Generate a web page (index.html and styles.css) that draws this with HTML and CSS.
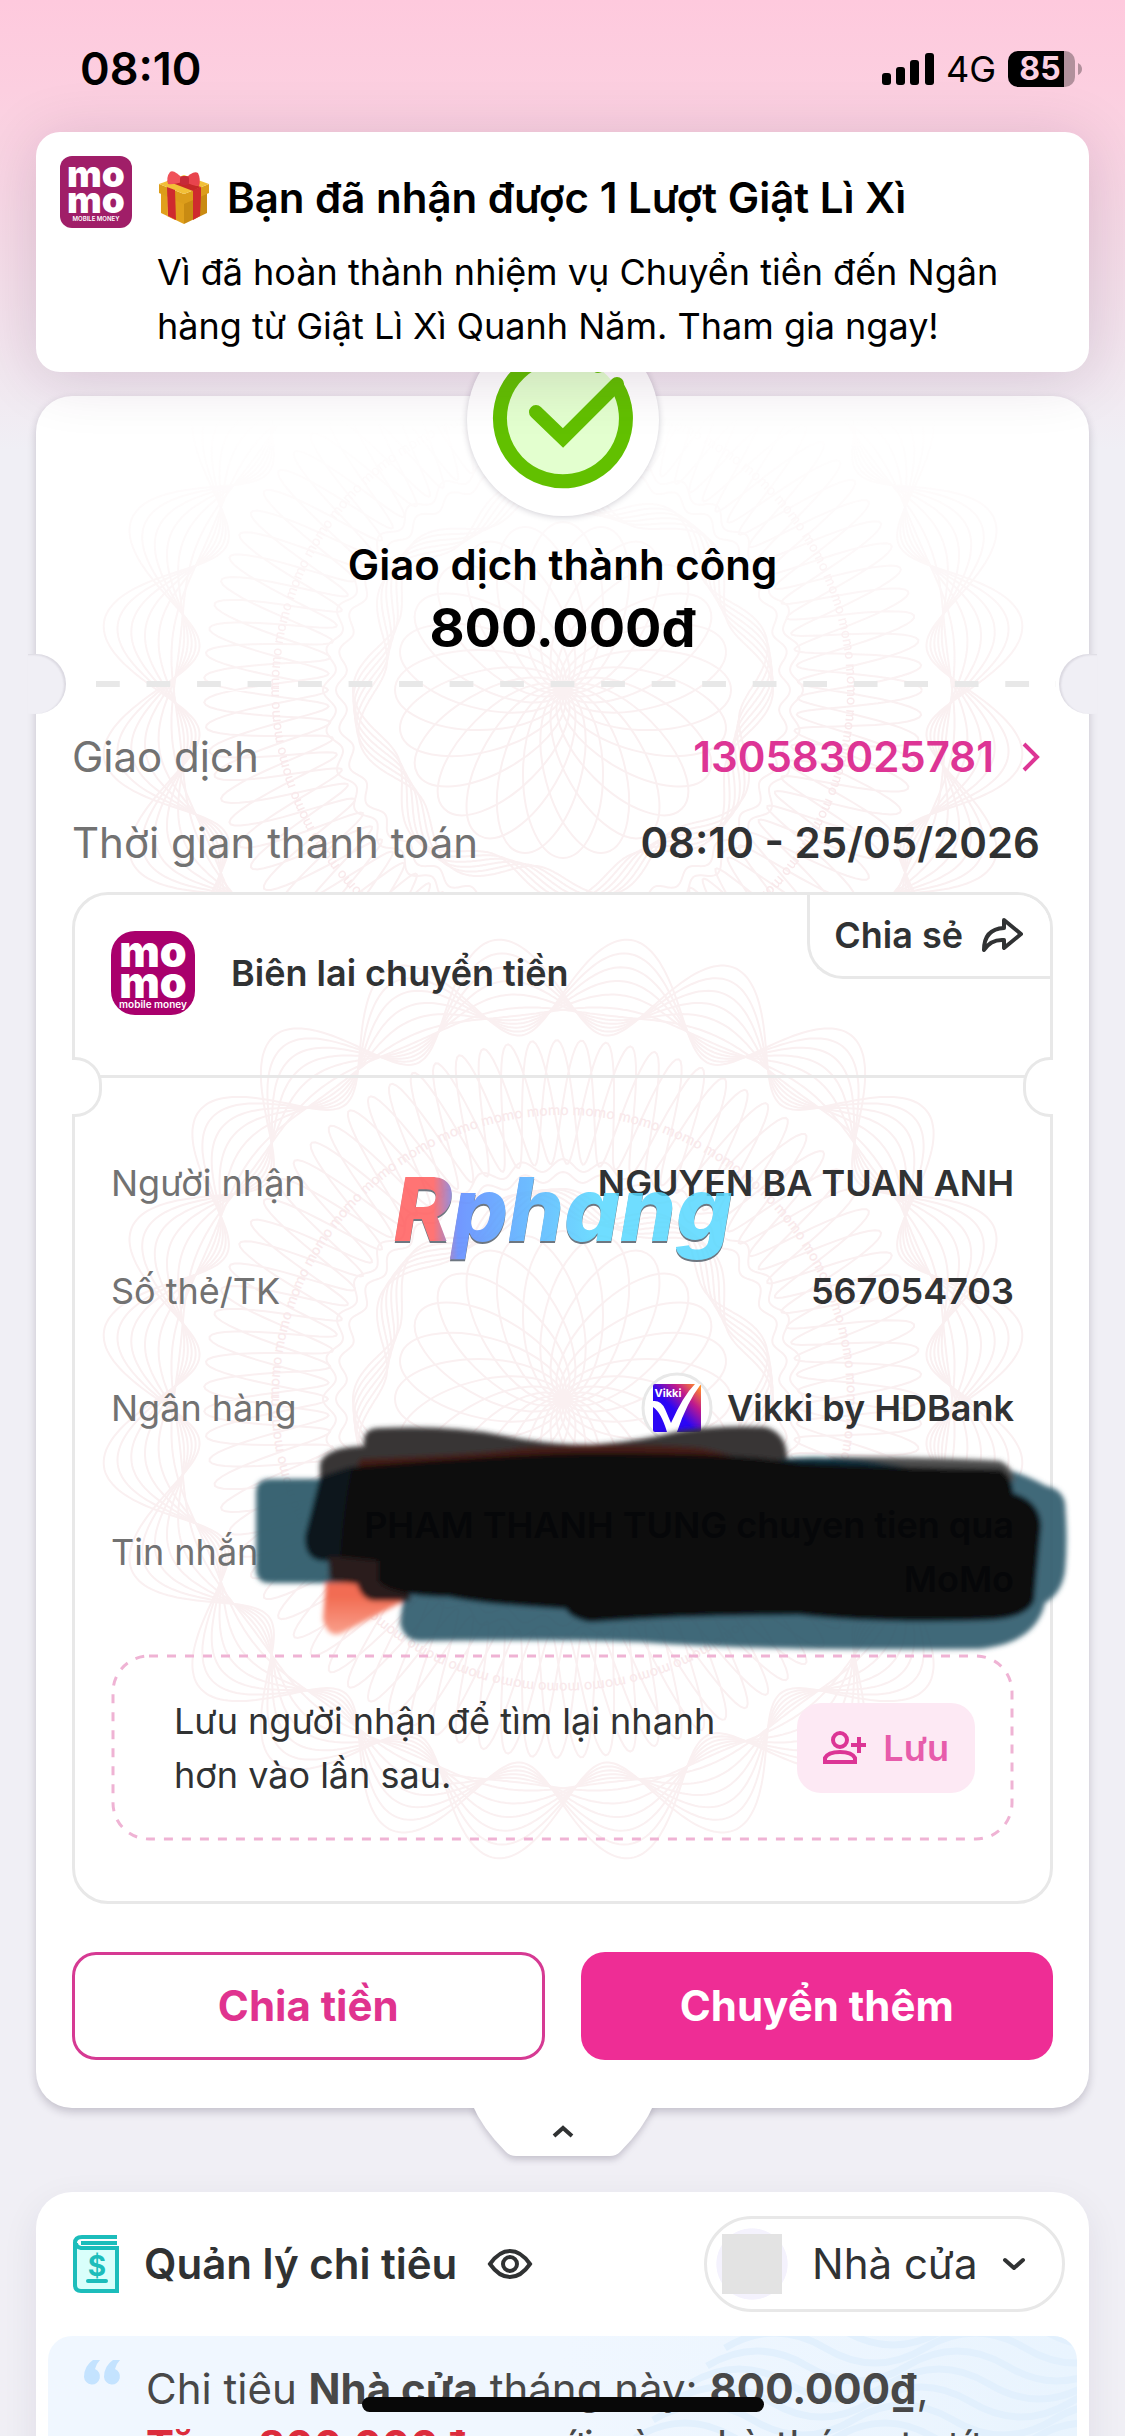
FILE: index.html
```html
<!doctype html>
<html lang="vi">
<head>
  <meta charset="utf-8">
  <meta name="viewport" content="width=device-width, initial-scale=1">
  <title>Giao dịch thành công</title>
  <link rel="stylesheet" href="styles.css">
</head>

<body>
  <svg class="defs" aria-hidden="true">
    <symbol id="momo" viewBox="0 0 84 84">
      <text class="mo" x="42" y="36" text-anchor="middle">mo</text>
      <text class="mo" x="42" y="67" text-anchor="middle">mo</text>
    </symbol>
    <symbol id="down" viewBox="0 0 24 14">
      <path d="M3 3l9 8 9-8" fill="none" stroke="currentColor" stroke-width="4" stroke-linecap="round" stroke-linejoin="round"/>
    </symbol>
  </svg>

  <header class="status">
    <span class="time">08:10</span>
    <div class="signals">
      <svg width="52" height="34" viewBox="0 0 52 34">
        <rect x="0" y="21" width="9" height="12" rx="3"/>
        <rect x="14" y="15" width="9" height="18" rx="3"/>
        <rect x="28" y="8" width="9" height="25" rx="3"/>
        <rect x="43" y="1" width="9" height="32" rx="3"/>
      </svg>
      <span class="network">4G</span>
      <svg width="74" height="36" viewBox="0 0 74 36">
        <path d="M56 0h1a10 10 0 0 1 10 10v16a10 10 0 0 1-10 10h-1z" fill="#b1909c"/>
        <path d="M10 0h46v36H10A10 10 0 0 1 0 26V10A10 10 0 0 1 10 0z"/>
        <path d="M70 12q4 2 4 6t-4 6z" fill="#b1909c"/>
        <text class="charge" x="32" y="29" text-anchor="middle">85</text>
      </svg>
    </div>
  </header>

  <section class="banner">
    <div class="logo logo-small">
      <svg viewBox="0 0 84 84"><use href="#momo"/><text class="tag" x="42" y="76" text-anchor="middle">MOBILE MONEY</text></svg>
    </div>
    <div class="banner-text">
      <h2>
        <svg class="gift" viewBox="0 0 54 54">
          <path d="M4 19l23 9v25L4 42z" fill="#e0a01c"/>
          <path d="M50 19l-23 9v25l23-11z" fill="#c98b12"/>
          <path d="M10 22l8 3v24l-8-4z" fill="#edb52e"/>
          <path d="M2 13l25 10 25-10v9L27 33 2 22z" fill="#dc9d1a"/>
          <path d="M2 13L27 4l25 9-25 10z" fill="#f2c037"/>
          <path d="M10 10l7-3 27 9-8 4z" fill="#c62828"/>
          <path d="M36 19l8-3v8l-1 21-7 4z" fill="#cf2a2e"/>
          <path d="M10 16l8 3 1 30-8-4z" fill="#cf2a2e"/>
          <path d="M27 9Q17-2 13 1q-4 5-2 12 6 1 16-3z" fill="#f0525a"/>
          <path d="M27 9q9-10 14-7 3 6 1 13-7 0-15-5z" fill="#e8444d"/>
          <rect x="23" y="5" width="9" height="9" rx="3" fill="#c62a38"/>
        </svg>
        Bạn đã nhận được 1 Lượt Giật Lì Xì
      </h2>
      <p>Vì đã hoàn thành nhiệm vụ Chuyển tiền đến Ngân hàng từ Giật Lì Xì Quanh Năm. Tham gia ngay!</p>
    </div>
  </section>

  <main>
    <section class="card result">
      <div class="pattern-clip"><svg class="pattern" viewBox="-470 -470 940 940"></svg></div>
      <div class="badge">
        <svg viewBox="0 0 192 192">
          <circle cx="96" cy="95" r="62" fill="#e3ffcf"/>
          <path d="M150 62A63 63 0 1 1 131 42" fill="none" stroke="#62c000" stroke-width="14" stroke-linecap="round"/>
          <path d="M69 88l27 26 54-54" fill="none" stroke="#62c000" stroke-width="14" stroke-linecap="round"/>
        </svg>
      </div>

      <h1>Giao dịch thành công</h1>
      <p class="amount">800.000đ</p>
      <div class="perforation"></div>

      <dl class="summary">
        <div class="row">
          <dt>Giao dịch</dt>
          <dd><a href="#giao-dich">130583025781
            <svg width="18" height="32" viewBox="0 0 18 32"><path d="M2 3l13 13L2 29" fill="none" stroke="currentColor" stroke-width="4"/></svg></a></dd>
        </div>
        <div class="row">
          <dt>Thời gian thanh toán</dt>
          <dd>08:10 - 25/05/2026</dd>
        </div>
      </dl>

      <article class="receipt">
        <div class="pattern-clip"><svg class="pattern" viewBox="-470 -470 940 940"></svg></div>
        <div class="receipt-head">
          <div class="receipt-title">
            <div class="logo">
              <svg viewBox="0 0 84 84"><use href="#momo"/><text class="tag tag-lower" x="42" y="77" text-anchor="middle">mobile money</text></svg>
            </div>
            <h3>Biên lai chuyển tiền</h3>
          </div>
          <button class="share" type="button">Chia sẻ
            <svg width="42" height="36" viewBox="0 0 42 36"><path d="M23 3l17 14-17 14v-8Q10 22 3 33 3 12 23 11z" fill="none" stroke="currentColor" stroke-width="4" stroke-linejoin="round"/></svg>
          </button>
        </div>
        <div class="receipt-cut"></div>

        <dl class="details">
          <div class="row">
            <dt>Người nhận</dt>
            <dd>NGUYEN BA TUAN ANH</dd>
          </div>
          <div class="row">
            <dt>Số thẻ/TK</dt>
            <dd>567054703</dd>
          </div>
          <div class="row">
            <dt>Ngân hàng</dt>
            <dd class="bank">
              <svg class="bank-logo" viewBox="0 0 72 72">
                <defs>
                  <linearGradient id="vikki" x1="0" y1="1" x2="1" y2="0">
                    <stop offset=".45" stop-color="#2b06f5"/>
                    <stop offset=".72" stop-color="#c01a8c"/>
                    <stop offset=".95" stop-color="#ff8a2a"/>
                  </linearGradient>
                </defs>
                <circle cx="36" cy="36" r="34" fill="#fff" stroke="#e8e8e8" stroke-width="3"/>
                <rect x="12" y="12" width="48" height="48" rx="2" fill="url(#vikki)"/>
                <path d="M12 29q8-1 12 8l6 14Q42 24 54 12h6Q46 30 36 60H26Q20 40 12 35z" fill="#fff"/>
                <text class="vikki" x="27" y="25" text-anchor="middle">Vikki</text>
              </svg>
              Vikki by HDBank
            </dd>
          </div>
          <div class="row message">
            <dt>Tin nhắn</dt>
            <dd>PHAM THANH TUNG chuyen tien qua MoMo</dd>
            <svg class="scribble" viewBox="244 1413 829 250">
              <defs>
                <filter id="soft" x="-5%" y="-5%" width="110%" height="110%"><feGaussianBlur stdDeviation="2.5"/></filter>
                <linearGradient id="rust" x1="0" y1="0" x2="0" y2="1">
                  <stop offset=".4" stop-color="#f26c52"/>
                  <stop offset="1" stop-color="#f9a08c"/>
                </linearGradient>
              </defs>
              <g filter="url(#soft)">
                <path fill="url(#rust)" d="M327 1570L323 1618Q328 1638 342 1632L404 1600V1570z"/>
                <path fill="#2f5c6c" opacity=".95" d="M256 1490Q257 1478 270 1478H345V1582H270Q256 1582 256 1568z"/>
                <path fill="#2f5c6c" opacity=".92" d="M404 1590L400 1622Q404 1640 420 1640Q560 1638 640 1641Q760 1650 980 1648Q1036 1642 1045 1602Q1062 1592 1065 1570Q1068 1540 1065 1502Q1062 1488 1046 1485Q1030 1476 1012 1470L960 1480V1580z"/>
                <path fill="#373536" d="M364 1440Q364 1427 380 1427Q450 1424 500 1434Q560 1446 600 1443Q640 1440 680 1430Q720 1424 765 1426Q788 1432 787 1460L780 1490H360L320 1500L320 1462Q326 1446 364 1445z"/>
                <path fill="#4f4f50" d="M830 1456Q940 1456 1000 1460Q1013 1466 1014 1480L830 1480z"/>
                <path fill="#0b3340" d="M780 1458Q820 1454 870 1460L960 1474L780 1480z"/>
                <path fill="#07191f" d="M320 1476L305 1535Q304 1560 325 1560H400V1466H350z"/>
                <path fill="#2b1f1c" d="M328 1556L330 1580L357 1583Q362 1600 376 1600H410V1556z"/>
                <path fill="#451a12" d="M357 1468L360 1458Q480 1454 520 1447Q640 1441 700 1447Q740 1454 760 1470z"/>
                <path fill="#0d0d0d" d="M352 1466Q520 1452 600 1452Q740 1452 800 1462Q920 1467 1000 1468Q1012 1474 1013 1492Q1040 1500 1041 1525L1034 1600Q1026 1617 990 1619Q880 1623 800 1614Q690 1614 590 1621Q570 1617 566 1608Q480 1603 450 1596Q390 1595 378 1580V1560L340 1556Q344 1500 352 1466z"/>
              </g>
            </svg>
          </div>
        </dl>

        <svg class="watermark" viewBox="0 0 350 100">
          <defs>
            <linearGradient id="brand" gradientUnits="userSpaceOnUse" x1="0" y1="0" x2="350" y2="0">
              <stop offset=".13" stop-color="#ff5c5c"/>
              <stop offset=".2" stop-color="#5a86ff"/>
              <stop offset=".38" stop-color="#54adff"/>
              <stop offset=".6" stop-color="#56d8ff"/>
            </linearGradient>
          </defs>
          <text class="shade" x="175" y="74" text-anchor="middle">Rphang</text>
          <text x="175" y="72" text-anchor="middle" fill="url(#brand)">Rphang</text>
        </svg>

        <div class="save">
          <svg class="save-frame"><rect x="2" y="2" rx="36"/></svg>
          <p>Lưu người nhận để tìm lại nhanh hơn vào lần sau.</p>
          <button type="button">
            <svg width="44" height="34" viewBox="0 0 44 34"><g fill="none" stroke="currentColor" stroke-width="4"><circle cx="17" cy="9" r="7"/><path d="M2 31v-4q3-6 15-6t15 6v4zM36 6v16M28 14h15"/></g></svg>
            <span>Lưu</span>
          </button>
        </div>
      </article>

      <div class="actions">
        <button type="button" class="outline">Chia tiền</button>
        <button type="button" class="solid">Chuyển thêm</button>
      </div>
    </section>

    <button class="collapse" type="button" aria-label="Thu gọn">
      <svg width="182" height="48" viewBox="0 0 182 48">
        <path d="M0-4H182Q172 20 148 44 144 48 138 48H44Q38 48 34 44 10 20 0-4z" fill="#fff"/>
        <path d="M82 28l9-8 9 8" fill="none" stroke="#303233" stroke-width="4"/>
      </svg>
    </button>

    <section class="card spending">
      <div class="spending-head">
        <svg width="46" height="60" viewBox="0 0 46 60">
          <path d="M3 12h40v44H8q-5 0-5-5z" fill="#d9fffb"/>
          <path d="M44 3H9Q2 3 2 9v42q0 6 6 6h36V14H8q-5-1-5-5M8 9h36" fill="none" stroke="#1cbdbb" stroke-width="4"/>
          <text class="dollar" x="24" y="42" text-anchor="middle">$</text>
          <path d="M15 47h18" stroke="#1cbdbb" stroke-width="4" stroke-linecap="round"/>
        </svg>
        <h2>Quản lý chi tiêu</h2>
        <button class="eye" type="button" aria-label="Ẩn số tiền">
          <svg width="46" height="32" viewBox="0 0 46 32"><g fill="none" stroke="currentColor" stroke-width="4"><path d="M3 16Q12 3 23 3t20 13Q34 29 23 29T3 16z"/><circle cx="23" cy="16" r="7"/></g></svg>
        </button>
        <label class="category">
          <span class="thumb"></span>
          <select aria-label="Danh mục"><option>Nhà cửa</option></select>
          <svg width="24" height="14"><use href="#down"/></svg>
        </label>
      </div>
      <div class="quote">
        <svg class="waves" viewBox="0 0 600 110" preserveAspectRatio="xMaxYMin slice"></svg>
        <svg class="marks" width="38" height="26" viewBox="0 0 38 26"><g fill="#c4e3ff"><path d="M16 0Q12 4 11 9a8 8 0 1 1-11 8Q0 6 9 0z"/><path d="M36 0q-4 4-5 9a8 8 0 1 1-11 8Q20 6 29 0z"/></g></svg>
        <p>Chi tiêu <b>Nhà cửa</b> tháng này: <b>800.000₫</b>,<br>
          <b class="up">Tăng 800.000₫</b> so với cùng kỳ tháng trước</p>
      </div>
    </section>
  </main>

  <div class="home-bar"></div>
  <script src="script.js"></script>
</body>
</html>
```
FILE: styles.css
```css
* {
  box-sizing: border-box;
}
html, body {
  height: 100%;
  margin: 0;
  overflow: hidden;
}
body {
  font-family: Inter, "Noto Sans", sans-serif;
  font-size: 36px;
  line-height: 54px;
  color: #303233;
  background: #f0eff5 linear-gradient(#fec9dd 0, #fccfe0 90px, #f5dbe7 240px, #f0eff5 450px) no-repeat;
}
h1, h2, h3, p, dl, dd {
  margin: 0;
}
button, select {
  font: inherit;
  color: inherit;
  border: 0;
  padding: 0;
  background: none;
}
a {
  text-decoration: none;
}
svg, symbol {
  flex: none;
  overflow: visible;
}
.defs {
  position: absolute;
  width: 0;
  height: 0;
}

/* status bar */
.status {
  display: flex;
  justify-content: space-between;
  align-items: center;
  height: 132px;
  padding: 6px 43px 0 80px;
  color: #000;
}
.time {
  font-size: 45px;
  font-weight: 600;
}
.signals {
  display: flex;
  align-items: center;
  gap: 12px;
}
.charge {
  font-size: 32px;
  font-weight: 700;
  fill: #fbd0e0;
}

/* notification */
.banner {
  position: relative;
  z-index: 2;
  display: flex;
  gap: 25px;
  margin: 0 36px;
  padding: 24px;
  height: 240px;
  border-radius: 24px;
  background: #fff;
  color: #000;
  box-shadow: 0 6px 60px rgba(70, 20, 70, .16);
}
.banner h2 {
  display: flex;
  align-items: center;
  gap: 16px;
  margin: 15px 0 20px;
  font-size: 42px;
  font-weight: 600;
}
.gift {
  width: 54px;
  height: 54px;
}
.logo {
  flex: none;
  width: 84px;
  height: 84px;
  border-radius: 24px;
  background: #a9006c;
}
.logo svg {
  display: block;
}
.logo-small {
  width: 72px;
  height: 72px;
  border-radius: 12px;
  background: #a01e68;
}
.mo {
  font-size: 43px;
  font-weight: 900;
  fill: #fff;
}
.tag {
  font-size: 7px;
  font-weight: 600;
  fill: #fff;
}
.tag-lower {
  font-size: 10px;
}

/* cards */
.card {
  position: relative;
  margin: 24px 36px 0;
  border-radius: 36px;
  background: #fff;
  box-shadow: 0 4px 8px rgba(40, 30, 60, .22);
}
.result {
  padding: 142px 36px 48px;
}
.result > * {
  position: relative;
}
.result > .pattern-clip, .receipt > .pattern-clip {
  position: absolute;
  inset: 0;
  overflow: hidden;
  border-radius: 36px;
}
.result > .pattern-clip {
  mask-image: linear-gradient(transparent 20px, #000 320px);
}
.pattern {
  position: absolute;
  top: -176px;
  left: 50%;
  width: 940px;
  height: 940px;
  transform: translateX(-50%);
  fill: none;
  stroke: #faf0f1;
  stroke-width: 2;
}
.receipt .pattern {
  top: 34px;
}
.pattern text {
  font-size: 14px;
  font-weight: 500;
  fill: #f9e9eb;
  stroke: none;
}
.result > .badge {
  position: absolute;
  top: -72px;
  left: 50%;
  width: 192px;
  height: 192px;
  margin-left: -96px;
  border-radius: 50%;
  background: #fff;
  box-shadow: 0 1px 6px rgba(40, 30, 60, .22);
}
h1 {
  font-size: 42px;
  font-weight: 600;
  line-height: 54px;
  text-align: center;
  color: #000;
}
.amount {
  margin-top: 3px;
  font-size: 54px;
  font-weight: 700;
  line-height: 66px;
  text-align: center;
  color: #000;
}
.perforation {
  height: 6px;
  margin: 20px -3px 43px 24px;
  background: linear-gradient(90deg, #e8e8e8 24px, transparent 24px) 0 0 / 50px 6px round;
}
/* round bites on both edges of the card */
.perforation::before, .perforation::after {
  content: "";
  position: absolute;
  top: -27px;
  width: 38px;
  height: 60px;
  background: #f0eff5;
}
.perforation::before {
  left: -68px;
  border-radius: 0 30px 30px 0;
  box-shadow: inset -2px 1px 2px rgba(40, 30, 60, .1);
}
.perforation::after {
  right: -41px;
  border-radius: 30px 0 0 30px;
  box-shadow: inset 2px 1px 2px rgba(40, 30, 60, .1);
}

.row {
  display: flex;
  justify-content: space-between;
  align-items: center;
}
dt {
  color: #727272;
}
.summary {
  display: grid;
  gap: 32px;
  padding-right: 13px;
  font-size: 42px;
}
.summary dd {
  font-weight: 600;
}
.summary a {
  display: flex;
  align-items: center;
  gap: 28px;
  color: #dd3595;
}

/* receipt */
.receipt {
  margin-top: 22px;
  border: 3px solid #e8e8e8;
  border-radius: 36px;
  background: #fff;
}
.receipt > * {
  position: relative;
}
.receipt-head {
  display: flex;
  justify-content: space-between;
  align-items: flex-start;
}
.receipt-title {
  display: flex;
  align-items: center;
  gap: 36px;
  padding: 36px 36px 60px;
}
h3 {
  font-size: 36px;
  font-weight: 600;
}
.share {
  display: flex;
  align-items: center;
  gap: 18px;
  height: 84px;
  padding: 0 27px 2px 24px;
  border: solid #e8e8e8;
  border-width: 0 0 3px 3px;
  border-radius: 0 33px 0 36px;
  background: #fff;
  font-weight: 600;
}
.receipt-cut {
  height: 3px;
  margin: 0 24px;
  background: #e8e8e8;
}
.receipt-cut::before, .receipt-cut::after {
  content: "";
  position: absolute;
  top: -18px;
  width: 27px;
  height: 54px;
  border: 3px solid #e8e8e8;
  background: #fff;
}
.receipt-cut::before {
  left: -27px;
  border-left: 0;
  border-radius: 0 27px 27px 0;
}
.receipt-cut::after {
  right: -27px;
  border-right: 0;
  border-radius: 27px 0 0 27px;
}
.details {
  display: grid;
  gap: 54px;
  padding: 78px 36px 48px;
}
.details dd {
  max-width: 700px;
  font-weight: 600;
  text-align: right;
}
.bank {
  display: flex;
  align-items: center;
  gap: 14px;
}
.bank-logo {
  width: 72px;
  height: 72px;
}
.vikki {
  font-size: 11px;
  font-weight: 700;
  fill: #fff;
}
.message {
  position: relative;
}
.message dd {
  position: relative;
  z-index: 1;
  color: #060709;
}
.scribble {
  position: absolute;
  top: -84px;
  left: 133px;
  width: 829px;
  height: 250px;
}
.receipt > .watermark {
  position: absolute;
  top: 274px;
  left: 50%;
  width: 350px;
  height: 100px;
  margin-left: -175px;
  opacity: .85;
}
.watermark text {
  font-size: 88px;
  font-weight: 800;
  font-style: italic;
}
.watermark .shade {
  fill: #55606c;
}
.save {
  display: flex;
  justify-content: space-between;
  align-items: center;
  gap: 24px;
  height: 187px;
  margin: 0 36px 60px;
  padding: 0 39px 0 63px;
}
.save-frame {
  position: absolute;
  inset: 0;
  width: 100%;
  height: 100%;
}
.save-frame rect {
  width: calc(100% - 4px);
  height: calc(100% - 4px);
  fill: none;
  stroke: #efb3d4;
  stroke-width: 3;
  stroke-dasharray: 9;
}
.save p {
  position: relative;
  max-width: 560px;
}
.save button {
  position: relative;
  display: flex;
  align-items: center;
  gap: 16px;
  height: 90px;
  padding: 0 26px;
  border-radius: 24px;
  background: #fde9f4;
  color: #dc3595;
  font-weight: 600;
}
.save span {
  color: #e75cab;
}

.actions {
  display: grid;
  grid-template-columns: 1fr 1fr;
  gap: 36px;
  margin-top: 48px;
}
.actions button {
  height: 108px;
  border-radius: 24px;
  font-size: 42px;
  font-weight: 700;
}
.outline {
  border: 3px solid #d63a93;
  color: #e0338f;
}
.solid {
  background: #ee2d95;
  color: #fff;
}
.collapse {
  position: relative;
  display: block;
  margin: 0 auto;
  height: 48px;
  filter: drop-shadow(0 4px 3px rgba(40, 30, 60, .2));
  clip-path: inset(0 -10px -10px);
}
.collapse svg {
  display: block;
}

/* spending */
.spending {
  margin-top: 36px;
  padding: 24px 12px 0;
  box-shadow: 0 12px 36px rgba(40, 30, 60, .08);
}
.spending-head {
  display: flex;
  align-items: center;
  padding: 0 12px 0 25px;
  font-size: 42px;
}
.spending h2 {
  margin: 0 30px 0 25px;
  font-size: 42px;
  font-weight: 600;
}
.eye svg {
  display: block;
}
.dollar {
  font-size: 28px;
  font-weight: 700;
  fill: #1cbdbb;
}
.category {
  display: flex;
  align-items: center;
  height: 96px;
  margin-left: auto;
  padding: 0 36px 0 9px;
  border: 3px solid #e8e8e8;
  border-radius: 48px;
}
.thumb {
  width: 72px;
  height: 72px;
  margin-right: 24px;
  background:
    linear-gradient(#e3e3e3, #e3e3e3) center / 60px 60px no-repeat,
    radial-gradient(closest-side, #f4f2fd 98%, transparent);
}
select {
  appearance: none;
  margin-right: 24px;
}
.quote {
  position: relative;
  display: flex;
  gap: 24px;
  height: 300px;
  margin-top: 24px;
  padding: 24px 36px;
  border-radius: 24px;
  overflow: hidden;
  background: linear-gradient(90deg, #f0f7ff 50%, #e9f4fe);
  font-size: 42px;
  line-height: 57px;
  color: #484848;
  white-space: nowrap;
}
.quote p {
  position: relative;
}
.waves {
  position: absolute;
  top: 0;
  right: 0;
  width: 600px;
  height: 110px;
  fill: none;
  stroke: #e2f0fd;
  stroke-width: 7;
}
.up {
  color: #dc2c3c;
}
.home-bar {
  position: fixed;
  z-index: 3;
  bottom: 24px;
  left: 50%;
  width: 402px;
  height: 15px;
  margin-left: -201px;
  border-radius: 8px;
  background: #080808;
}
```
FILE: script.js
```js
// closed polar curve r(t) over a number of turns
function curve(radius, turns) {
  let d = '';
  const steps = 900 * turns;
  for (let i = 0; i <= steps; i++) {
    const t = i / steps * turns * Math.PI * 2;
    const r = radius(t);
    d += (i ? 'L' : 'M') + (r * Math.cos(t)).toFixed(1) + ' ' + (r * Math.sin(t)).toFixed(1);
  }
  return '<path d="' + d + '"/>';
}

function guilloche(id) {
  let out = '';
  // outer waves, two mirrored families
  for (let i = 0; i < 6; i++) {
    const top = 464 - i * 14;
    const bottom = 366 + i * 4;
    const mid = (top + bottom) / 2;
    const amp = (top - bottom) / 2;
    out += curve(t => mid + amp * Math.cos(12 * t + 1.76), 1);
    out += curve(t => mid + amp * Math.cos(12 * t - 1.76), 1);
  }
  // ring of loops
  out += curve(t => 297 + 62 * Math.cos(t * 91 / 3), 3);
  // scalloped ring
  out += curve(t => 234 + 6 * Math.cos(36 * t), 1);
  out += curve(t => 222 + 5 * Math.cos(36 * t), 1);
  for (let i = 0; i < 6; i++) {
    out += curve(t => 194 + 16 * Math.cos(8 * t + i * 0.4), 1);
  }
  // inner flower
  for (let a = 0; a < 360; a += 15) {
    out += '<ellipse cx="84" rx="84" ry="40" transform="rotate(' + a + ')"/>';
  }
  out += '<path id="' + id + '" stroke="none" d="M-284 0A284 284 0 0 1 284 0A284 284 0 0 1-284 0"/>';
  out += '<text><textPath href="#' + id + '">' + 'momo '.repeat(40) + '</textPath></text>';
  return out;
}

document.querySelectorAll('.pattern').forEach((svg, i) => {
  svg.innerHTML = guilloche('ring' + i);
});

let waves = '';
for (let y = -60; y < 200; y += 18) {
  waves += '<path d="M' + (260 - y) + ' ' + y + 'q50-30 100 0t100 0 100 0 100 0 100 0"/>';
}
document.querySelector('.waves').innerHTML = waves;
```
